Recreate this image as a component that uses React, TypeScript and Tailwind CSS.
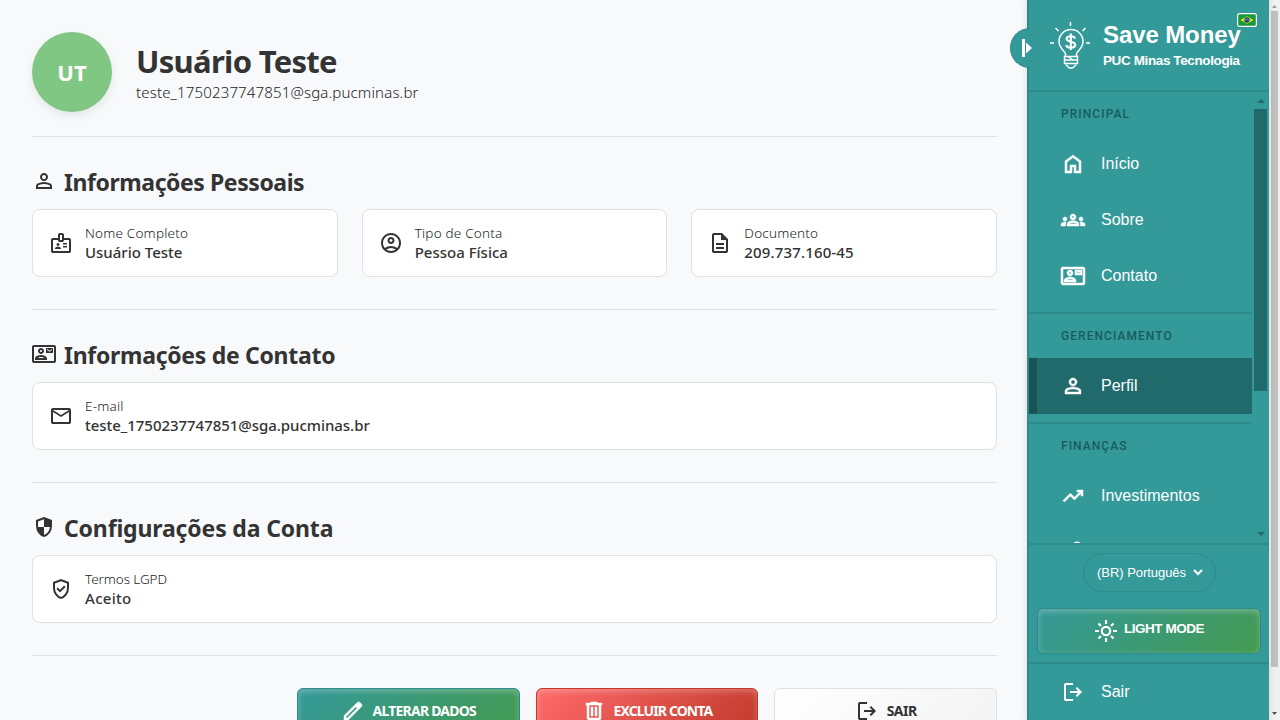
import type { ReactNode } from "react";
import { MdOutlineContactMail } from "react-icons/md";

const paths = {
  home: "M240-200h120v-240h240v240h120v-360L480-740 240-560v360Zm-80 80v-480l320-240 320 240v480H520v-240h-80v240H160Z",
  person:
    "M480-480q-66 0-113-47t-47-113q0-66 47-113t113-47q66 0 113 47t47 113q0 66-47 113t-113 47ZM160-160v-112q0-34 17.5-62.5T224-378q62-31 126-46.5T480-440q66 0 130 15.5T736-378q29 15 46.5 43.5T800-272v112H160Zm80-80h480v-32q0-11-5.5-20T700-306q-54-27-109-40.5T480-360q-56 0-111 13.5T260-306q-9 5-14.5 14t-5.5 20v32Zm240-320q33 0 56.5-23.5T560-640q0-33-23.5-56.5T480-720q-33 0-56.5 23.5T400-640q0 33 23.5 56.5T480-560Z",
  groups:
    "M0-240v-63q0-43 44-70t116-27q13 0 25 .5t23 2.5q-14 21-21 44t-7 48v65H0Zm240 0v-65q0-32 17.5-58.5T307-410q32-20 76.5-30t96.5-10q53 0 97.5 10t76.5 30q32 20 49 46.5t17 58.5v65H240Zm540 0v-65q0-26-6.5-49T754-397q11-2 22.5-2.5t23.5-.5q72 0 116 26.5t44 70.5v63H780Zm-455-80h311q-10-20-55.5-35T480-370q-55 0-100.5 15T325-320ZM160-440q-33 0-56.5-23.5T80-520q0-34 23.5-57t56.5-23q34 0 57 23t23 57q0 33-23 56.5T160-440Zm640 0q-33 0-56.5-23.5T720-520q0-34 23.5-57t56.5-23q34 0 57 23t23 57q0 33-23 56.5T800-440Zm-320-40q-50 0-85-35t-35-85q0-51 35-85.5t85-34.5q51 0 85.5 34.5T600-600q0 50-34.5 85T480-480Zm0-80q17 0 28.5-11.5T520-600q0-17-11.5-28.5T480-640q-17 0-28.5 11.5T440-600q0 17 11.5 28.5T480-560Z",
  trending:
    "m136-240-56-56 296-298 160 160 208-206H640v-80h240v240h-80v-104L536-320 376-480 136-240Z",
  logout:
    "M200-120q-33 0-56.5-23.5T120-200v-560q0-33 23.5-56.5T200-840h280v80H200v560h280v80H200Zm440-160-55-58 102-102H360v-80h327L585-622l55-58 200 200-200 200Z",
  edit: "M200-200h57l391-391-57-57-391 391v57Zm-80 80v-170l528-527q12-11 26.5-17t30.5-6q16 0 31 6t26 18l55 56q12 11 17.5 26t5.5 30q0 16-5.5 30.5T817-647L290-120H120Z",
  trash:
    "M280-120q-33 0-56.5-23.5T200-200v-520h-40v-80h200v-40h240v40h200v80h-40v520q0 33-23.5 56.5T680-120H280Zm400-600H280v520h400v-520ZM360-280h80v-360h-80v360Zm160 0h80v-360h-80v360Z",
  mail: "M160-160q-33 0-56.5-23.5T80-240v-480q0-33 23.5-56.5T160-800h640q33 0 56.5 23.5T880-720v480q0 33-23.5 56.5T800-160H160Zm320-280L160-640v400h640v-400L480-440Zm0-80 320-200H160l320 200ZM160-640v-80 480-400Z",
  security:
    "M480-80q-139-35-229.5-159.5T160-516v-244l320-120 320 120v244q0 152-90.5 276.5T480-80Zm0-84q97-30 162-118.5T718-480H480v-315l-240 90v207q0 7 2 18h238v316Z",
  verified:
    "m438-338 226-226-57-57-169 169-84-84-57 57 141 141Zm42 258q-139-35-229.5-159.5T160-516v-244l320-120 320 120v244q0 152-90.5 276.5T480-80Zm0-84q104-33 172-132t68-220v-189l-240-90-240 90v189q0 121 68 220t172 132Z",
  doc: "M320-240h320v-80H320v80Zm0-160h320v-80H320v80ZM240-80q-33 0-56.5-23.5T160-160v-640q0-33 23.5-56.5T240-880h320l240 240v480q0 33-23.5 56.5T720-80H240Zm280-520v-200H240v640h480v-440H520Z",
  account:
    "M234-276q51-39 114-61.5T480-360q69 0 132 22.5T726-276q35-41 54.5-93T800-480q0-133-93.5-226.5T480-800q-133 0-226.5 93.5T160-480q0 59 19.5 111t54.5 93Zm246-164q-59 0-99.5-40.5T340-580q0-59 40.5-99.5T480-720q59 0 99.5 40.5T620-580q0 59-40.5 99.5T480-440Zm0 360q-83 0-156-31.5T197-197q-54-54-85.5-127T80-480q0-83 31.5-156T197-763q54-54 127-85.5T480-880q83 0 156 31.5T763-763q54 54 85.5 127T880-480q0 83-31.5 156T763-197q-54 54-127 85.5T480-80Zm0-80q53 0 100-15.5t86-44.5q-39-29-86-44.5T480-280q-53 0-100 15.5T294-220q39 29 86 44.5T480-160Zm0-360q26 0 43-17t17-43q0-26-17-43t-43-17q-26 0-43 17t-17 43q0 26 17 43t43 17Z",
  badge:
    "M160-80q-33 0-56.5-23.5T80-160v-440q0-33 23.5-56.5T160-680h200v-120q0-33 23.5-56.5T440-880h80q33 0 56.5 23.5T600-800v120h200q33 0 56.5 23.5T880-600v440q0 33-23.5 56.5T800-80H160Zm0-80h640v-440H600q0 33-23.5 56.5T520-520h-80q-33 0-56.5-23.5T360-600H160v440Zm80-80h240v-18q0-17-9.5-31.5T444-312q-20-9-40.5-13.5T360-330q-23 0-43.5 4.5T276-312q-17 8-26.5 22.5T240-258v18Zm320-60h160v-60H560v60Zm-200-60q25 0 42.5-17.5T420-420q0-25-17.5-42.5T360-480q-25 0-42.5 17.5T300-420q0 25 17.5 42.5T360-360Zm200-60h160v-60H560v60ZM440-600h80v-200h-80v200Z",
};

function Icon({ name, bold }: { name: keyof typeof paths; bold?: boolean }) {
  return (
    <svg
      viewBox="0 -960 960 960"
      className="size-6 shrink-0 overflow-visible"
      fill="currentColor"
      stroke={bold ? "currentColor" : "none"}
      strokeWidth="20"
    >
      <path d={paths[name]} />
    </svg>
  );
}

function Card({
  icon,
  label,
  value,
  labelClass = "tracking-[0.2px]",
  valueClass = "",
}: {
  icon: ReactNode;
  label: string;
  value: string;
  labelClass?: string;
  valueClass?: string;
}) {
  return (
    <div className="flex h-[68px] items-center gap-3 rounded-lg border border-[#dee2e6] bg-white px-4">
      {icon}
      <div className="pb-px whitespace-nowrap">
        <div className={`text-[13.5px] leading-[19px] font-light text-[#1c1c1c] ${labelClass}`}>{label}</div>
        <div className={`text-[15px] leading-[19px] font-medium ${valueClass}`}>{value}</div>
      </div>
    </div>
  );
}

function Section({
  icon,
  title,
  titleClass,
  children,
}: {
  icon: ReactNode;
  title: string;
  titleClass: string;
  children: ReactNode;
}) {
  return (
    <section className="h-[173px] border-b border-[#dee2e6] pt-[31px]">
      <h2
        className={`flex h-[41px] items-start gap-2 text-[23px] leading-[28px] font-bold whitespace-nowrap ${titleClass}`}
      >
        <span className="pt-px">{icon}</span>
        {title}
      </h2>
      {children}
    </section>
  );
}

function NavItem({ icon, label, active }: { icon: ReactNode; label: string; active?: boolean }) {
  return (
    <a
      className={
        active
          ? "flex h-14 items-center gap-4 border-l-8 border-[#185456] bg-[#206a6c] pl-6"
          : "flex h-14 items-center gap-4 pl-8"
      }
    >
      {icon}
      <span>{label}</span>
    </a>
  );
}

function NavLabel({ children }: { children: string }) {
  return (
    <div className="flex h-11 items-center pl-8 font-[Roboto,sans-serif] text-[12px] font-medium tracking-[1.05px] text-[#185c5e]">
      {children}
    </div>
  );
}

function Logo() {
  return (
    <svg viewBox="0 0 42 50" className="h-[50px] w-[42px]" fill="none" stroke="white" strokeWidth="1.5">
      <path d="M20.500 1v4M5.500 7l3 3M35.500 7l-3 3M0 22h4M36 22h4" />
      <path d="M15.500 35v-2c0-2.500-6.500-5.500-6.500-12.500a12 12 0 0 1 24 0c0 7-6.500 10-6.500 12.500v2" />
      <path d="M14.500 35.500h13v3.500h-13zM14.500 39h13v3.500h-13zM16.500 43.500v1l3 2.500h3l3-2.500v-1M18 35.500l5 3.500" />
      <path d="M25 17.700c-.5-3.400-8.400-3.200-8.400.1 0 3.900 8.600 2.200 8.600 6 0 3.800-8.400 3.700-8.900.2M20.800 12.500v16.500" strokeWidth="2.100" />
    </svg>
  );
}

function Flag() {
  return (
    <svg viewBox="0 0 20 14" className="absolute top-[13px] right-3 h-[14px] w-5">
      <rect x=".6" y=".6" width="18.800" height="12.800" rx="2" fill="#159a3a" stroke="white" strokeWidth="1.200" />
      <path d="M10 3.300 16.500 7 10 10.700 3.500 7z" fill="#f4dc1c" />
      <circle cx="10" cy="7" r="2.700" fill="#164383" />
      <path d="M7.500 6.200q3-.3 5 1.800" stroke="#b9cbd8" strokeWidth=".6" fill="none" />
    </svg>
  );
}

function Sidebar() {
  return (
    <aside className="relative flex w-[242px] shrink-0 flex-col border-l-2 border-[#2d8b8b] bg-[#349999] font-['Liberation_Sans',Arial,sans-serif] text-white shadow-[0_0_8px_rgba(0,0,0,0.12)]">
      <button className="absolute top-7 -left-[19px] flex h-10 w-5 items-center rounded-l-full border border-r-0 border-[#2d8b8b] bg-[#349999]">
        <svg viewBox="0 0 12 18" className="ml-[11px] h-[18px] w-3 shrink-0 overflow-visible" fill="white">
          <path d="M0 0h3v18H0zM4 3.500l6 5.500-6 5.500z" />
        </svg>
      </button>
      <Flag />
      <header className="flex h-[92px] shrink-0 items-start border-b-2 border-[#2d8b8b] pl-[21px]">
        <div className="pt-[21px]">
          <Logo />
        </div>
        <div className="pt-5 pl-[11px] whitespace-nowrap">
          <div className="text-[24px] leading-[30px] font-bold tracking-[-0.1px]">Save Money</div>
          <div className="text-[13.5px] leading-[21px] font-bold tracking-[-0.39px]">PUC Minas Tecnologia</div>
        </div>
      </header>

      <div className="flex h-[451px] shrink-0 overflow-hidden">
        <nav className="w-[223px]">
          <div className="border-b-2 border-[#2d8b8b] pb-2">
            <NavLabel>PRINCIPAL</NavLabel>
            <NavItem icon={<Icon bold name="home" />} label="Início" />
            <NavItem icon={<Icon bold name="groups" />} label="Sobre" />
            <NavItem
              icon={
                <MdOutlineContactMail className="size-6 overflow-visible [&>path:not([fill=none])]:[stroke-width:0.5]" />
              }
              label="Contato"
            />
          </div>
          <div className="border-b-2 border-[#2d8b8b] pb-2">
            <NavLabel>GERENCIAMENTO</NavLabel>
            <NavItem active icon={<Icon bold name="person" />} label="Perfil" />
          </div>
          <NavLabel>FINANÇAS</NavLabel>
          <NavItem icon={<Icon bold name="trending" />} label="Investimentos" />
          <div className="flex h-14 items-center pl-8">
            <svg viewBox="0 0 24 24" className="size-6" fill="none" stroke="white" strokeWidth="2">
              <circle cx="16" cy="6" r="3.500" />
              <path d="M2 12h4v9H2zM7 13h3l7 3v2h-5M7 19l7 2 7-3" />
            </svg>
          </div>
        </nav>
        <div className="flex w-[17px] flex-col items-center pt-[7px] pb-1">
          <svg viewBox="0 0 8 4" className="h-1 w-2" fill="#206a6c">
            <path d="M0 4 4 0l4 4z" />
          </svg>
          <div className="mt-[6px] h-[282px] w-[13px] shrink-0 bg-[#206a6c]" />
          <svg viewBox="0 0 8 4" className="mt-auto mb-[3px] h-1 w-2" fill="#206a6c">
            <path d="M0 0h8L4 4z" />
          </svg>
        </div>
      </div>

      <footer className="shrink-0 border-t-2 border-[#2d8b8b]">
        <div className="flex h-[119px] flex-col items-center border-b-2 border-[#2d8b8b] pt-2">
          <button className="flex h-[39px] w-[133px] items-center justify-center gap-[7px] rounded-full border border-[#2d8b8b] pl-[2px] text-[13px] tracking-[-0.05px] whitespace-nowrap">
            (BR) Português
            <svg viewBox="0 0 10 7" className="h-[7px] w-[10px]" fill="none" stroke="white" strokeWidth="2">
              <path d="m1 1 4 4 4-4" />
            </svg>
          </button>
          <button className="mt-4 flex h-[46px] w-[224px] items-center justify-center gap-[6px] rounded-md border border-[#2d8b8b] bg-[linear-gradient(135deg,#349999,#439a50)] text-[13.5px] font-bold tracking-[-0.48px] whitespace-nowrap shadow-[inset_0_2px_6px_rgba(255,255,255,0.3)]">
            <svg viewBox="0 0 24 24" className="size-6" fill="none" stroke="white" strokeWidth="2.200">
              <circle cx="12" cy="12" r="4.200" />
              <path d="M12 1v4M12 19v4M1 12h4M19 12h4M4.500 4.500 7 7M17 17l2.500 2.500M4.500 19.500 7 17M17 7l2.500-2.500" />
            </svg>
            <span className="-mt-[3px]">LIGHT MODE</span>
          </button>
        </div>
        <NavItem icon={<Icon name="logout" />} label="Sair" />
      </footer>
    </aside>
  );
}

function PageScrollbar() {
  return (
    <div className="flex w-[11px] shrink-0 flex-col items-center bg-[#f1f1f1] pt-[5px] pb-[3px]">
      <svg viewBox="0 0 5 3" className="h-[3px] w-[5px]" fill="#a3a3a3">
        <path d="M0 3 2.500 0 5 3z" />
      </svg>
      <div className="mt-[3px] h-[656px] w-[7px] shrink-0 bg-[#c1c1c1]" />
      <svg viewBox="0 0 5 3" className="mt-auto mb-[2px] h-[3px] w-[5px]" fill="#505050">
        <path d="M0 0h5L2.500 3z" />
      </svg>
    </div>
  );
}

export default function App() {
  return (
    <div className="flex h-[720px] w-[1280px] overflow-hidden bg-[#f8f9fb]">
      <main className="h-full w-[1027px] shrink-0 overflow-hidden px-8 pr-[30px] font-['Noto_Sans','Open_Sans',sans-serif] text-[#333]">
        <div className="w-[965px]">
          <header className="flex h-[137px] items-start border-b border-[#dee2e6] pt-8">
            <div className="flex size-20 items-center justify-center rounded-full bg-[#81c784] text-[22px] font-bold text-white shadow-[0_4px_8px_rgba(0,0,0,0.08)]">
              UT
            </div>
            <div className="pt-[9px] pl-6 whitespace-nowrap">
              <h1 className="text-[31px] leading-[40px] font-bold tracking-[-0.7px]">Usuário Teste</h1>
              <p className="text-[15px] leading-[22px] font-light tracking-[0.16px] text-[#1c1c1c]">
                teste_1750237747851@sga.pucminas.br
              </p>
            </div>
          </header>

          <Section icon={<Icon name="person" />} title="Informações Pessoais" titleClass="tracking-[-0.43px]">
            <div className="grid grid-cols-3 gap-6">
              <Card icon={<Icon name="badge" />} label="Nome Completo" value="Usuário Teste" />
              <Card icon={<Icon name="account" />} label="Tipo de Conta" value="Pessoa Física" />
              <Card icon={<Icon name="doc" />} label="Documento" value="209.737.160-45" valueClass="tracking-[0.15px]" />
            </div>
          </Section>
          <Section
            icon={<MdOutlineContactMail className="size-6" />}
            title="Informações de Contato"
            titleClass="tracking-[-0.29px]"
          >
            <Card
              icon={<Icon name="mail" />}
              label="E-mail"
              value="teste_1750237747851@sga.pucminas.br"
              valueClass="tracking-[-0.04px]"
            />
          </Section>
          <Section icon={<Icon name="security" />} title="Configurações da Conta" titleClass="tracking-[-0.15px]">
            <Card
              icon={<Icon name="verified" />}
              label="Termos LGPD"
              value="Aceito"
              labelClass="tracking-[-0.08px]"
              valueClass="tracking-[0.3px]"
            />
          </Section>

          <div className="flex justify-end gap-4 pt-8 text-[14px] leading-5 font-bold whitespace-nowrap">
            <button className="flex h-[46px] w-[222.7px] items-center justify-center gap-2 rounded-md border border-[#2d8b8b] bg-[linear-gradient(135deg,#349999,#439a50)] text-white shadow-[inset_0_2px_6px_rgba(255,255,255,0.3)]">
              <Icon bold name="edit" />
              <span className="tracking-[-0.78px]">ALTERAR DADOS</span>
            </button>
            <button className="flex h-[46px] w-[222.7px] items-center justify-center gap-2 rounded-md border border-[#c0392b] bg-[linear-gradient(135deg,#ff6b6b,#c0392b)] text-white shadow-[inset_0_2px_6px_rgba(255,255,255,0.3)]">
              <Icon bold name="trash" />
              <span className="tracking-[-0.9px]">EXCLUIR CONTA</span>
            </button>
            <button className="flex h-[46px] w-[222.7px] items-center justify-center gap-2 rounded-md border border-[#dee2e6] bg-[linear-gradient(135deg,#ffffff,#f3f3f3)]">
              <Icon name="logout" />
              <span className="tracking-[-0.5px]">SAIR</span>
            </button>
          </div>
        </div>
      </main>
      <Sidebar />
      <PageScrollbar />
    </div>
  );
}
